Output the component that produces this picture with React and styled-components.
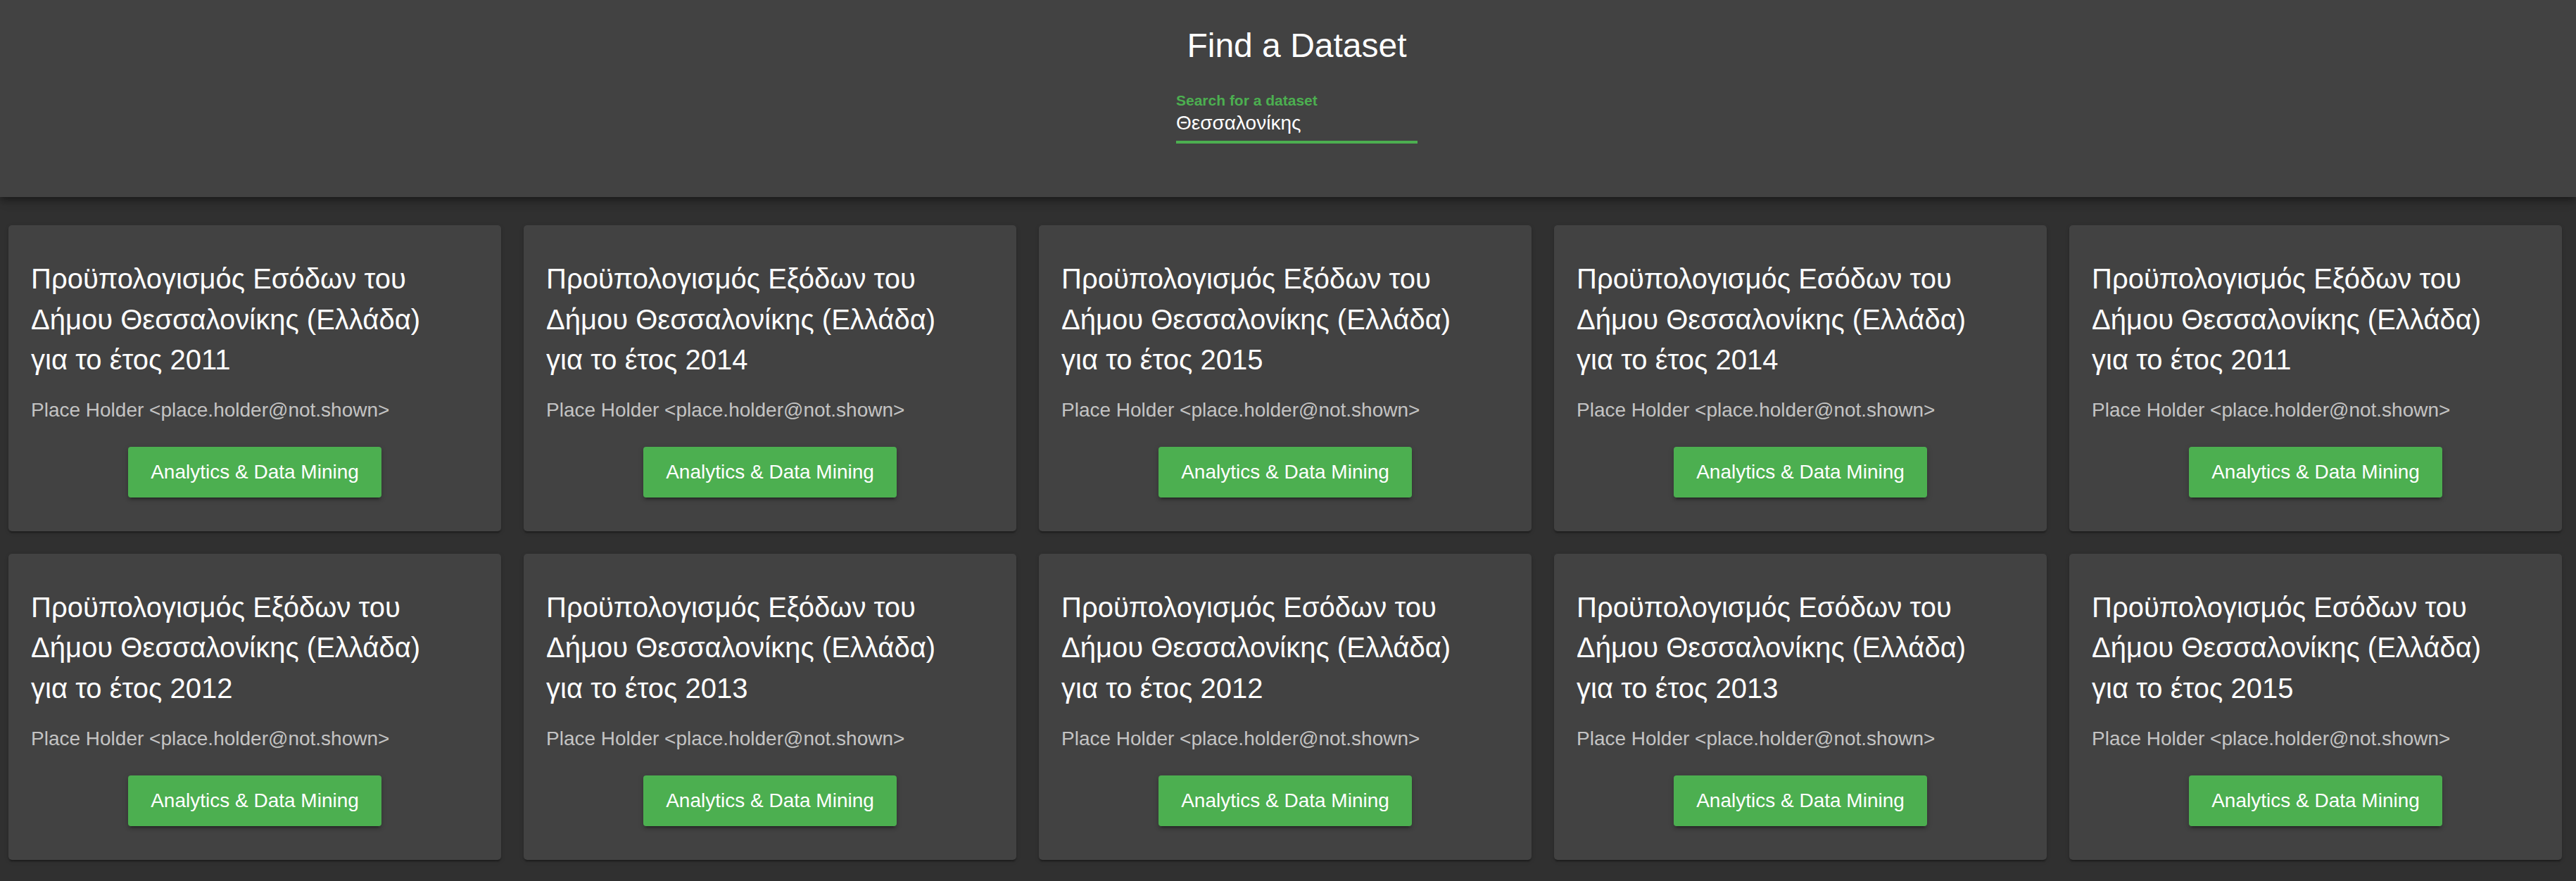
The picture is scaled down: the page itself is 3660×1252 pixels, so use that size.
import React from "react";
import styled, { createGlobalStyle } from "styled-components";

const GlobalStyle = createGlobalStyle`
  html, body {
    margin: 0;
    padding: 0;
    background: #303030;
    font-family: "Liberation Sans", Arial, sans-serif;
    color: #ffffff;
  }
  * { box-sizing: border-box; }
`;

const Page = styled.div`
  min-height: 1252px;
  background: #303030;
`;

const Header = styled.header`
  position: relative;
  z-index: 1;
  height: 280px;
  background: #424242;
  padding: 33px 0 0 25px;
  display: flex;
  flex-direction: column;
  align-items: center;
  box-shadow: 0 4px 8px -2px rgba(0, 0, 0, 0.25), 0 8px 10px 0 rgba(0, 0, 0, 0.16),
    0 2px 20px 0 rgba(0, 0, 0, 0.12);
`;

const Title = styled.h1`
  margin: 0 0 35px;
  font-size: 48px;
  line-height: 64px;
  font-weight: 400;
  color: #ffffff;
`;

const SearchField = styled.label`
  width: 343px;
  display: flex;
  flex-direction: column;
  border-bottom: 4px solid #4caf50;
  padding-bottom: 9px;
`;

const FieldLabel = styled.span`
  font-size: 21px;
  line-height: 21px;
  font-weight: 700;
  color: #4caf50;
`;

const Input = styled.input`
  margin-top: 6px;
  height: 32px;
  padding: 0;
  border: none;
  outline: none;
  background: transparent;
  color: #ffffff;
  caret-color: #ffffff;
  font-family: "Liberation Sans", Arial, sans-serif;
  font-size: 28px;
  line-height: 32px;
`;

const Grid = styled.main`
  display: grid;
  grid-template-columns: repeat(5, 1fr);
  gap: 32px;
  padding: 40px 20px 32px 12px;
`;

const Card = styled.article`
  background: #424242;
  border-radius: 5px;
  padding: 48px 32px;
  display: flex;
  flex-direction: column;
  box-shadow: 0 4px 2px -2px rgba(0, 0, 0, 0.2), 0 2px 2px 0 rgba(0, 0, 0, 0.14),
    0 2px 6px 0 rgba(0, 0, 0, 0.12);
`;

const CardTitle = styled.h2`
  margin: 0 0 22px;
  max-width: 580px;
  font-size: 40px;
  line-height: 57.6px;
  font-weight: 400;
  color: #ffffff;
`;

const Author = styled.p`
  margin: 0 0 32px;
  font-size: 28px;
  line-height: 40px;
  color: rgba(255, 255, 255, 0.7);
`;

const CategoryButton = styled.button`
  align-self: center;
  width: 360px;
  height: 72px;
  padding: 0 32px;
  border: none;
  border-radius: 4px;
  background: #4caf50;
  color: #ffffff;
  font-family: "Liberation Sans", Arial, sans-serif;
  font-size: 28px;
  line-height: 1;
  cursor: pointer;
  box-shadow: 0 6px 2px -4px rgba(0, 0, 0, 0.2), 0 4px 4px 0 rgba(0, 0, 0, 0.14),
    0 2px 10px 0 rgba(0, 0, 0, 0.12);
`;

const datasets = [
  { kind: "Εσόδων", year: 2011 },
  { kind: "Εξόδων", year: 2014 },
  { kind: "Εξόδων", year: 2015 },
  { kind: "Εσόδων", year: 2014 },
  { kind: "Εξόδων", year: 2011 },
  { kind: "Εξόδων", year: 2012 },
  { kind: "Εξόδων", year: 2013 },
  { kind: "Εσόδων", year: 2012 },
  { kind: "Εσόδων", year: 2013 },
  { kind: "Εσόδων", year: 2015 },
];

export default function App() {
  return (
    <Page>
      <GlobalStyle />
      <Header>
        <Title>Find a Dataset</Title>
        <SearchField>
          <FieldLabel>Search for a dataset</FieldLabel>
          <Input defaultValue="Θεσσαλονίκης" autoFocus />
        </SearchField>
      </Header>
      <Grid>
        {datasets.map((d, i) => (
          <Card key={i}>
            <CardTitle>
              Προϋπολογισμός {d.kind} του Δήμου Θεσσαλονίκης (Ελλάδα) για το έτος {d.year}
            </CardTitle>
            <Author>Place Holder &lt;place.holder@not.shown&gt;</Author>
            <CategoryButton>Analytics &amp; Data Mining</CategoryButton>
          </Card>
        ))}
      </Grid>
    </Page>
  );
}
